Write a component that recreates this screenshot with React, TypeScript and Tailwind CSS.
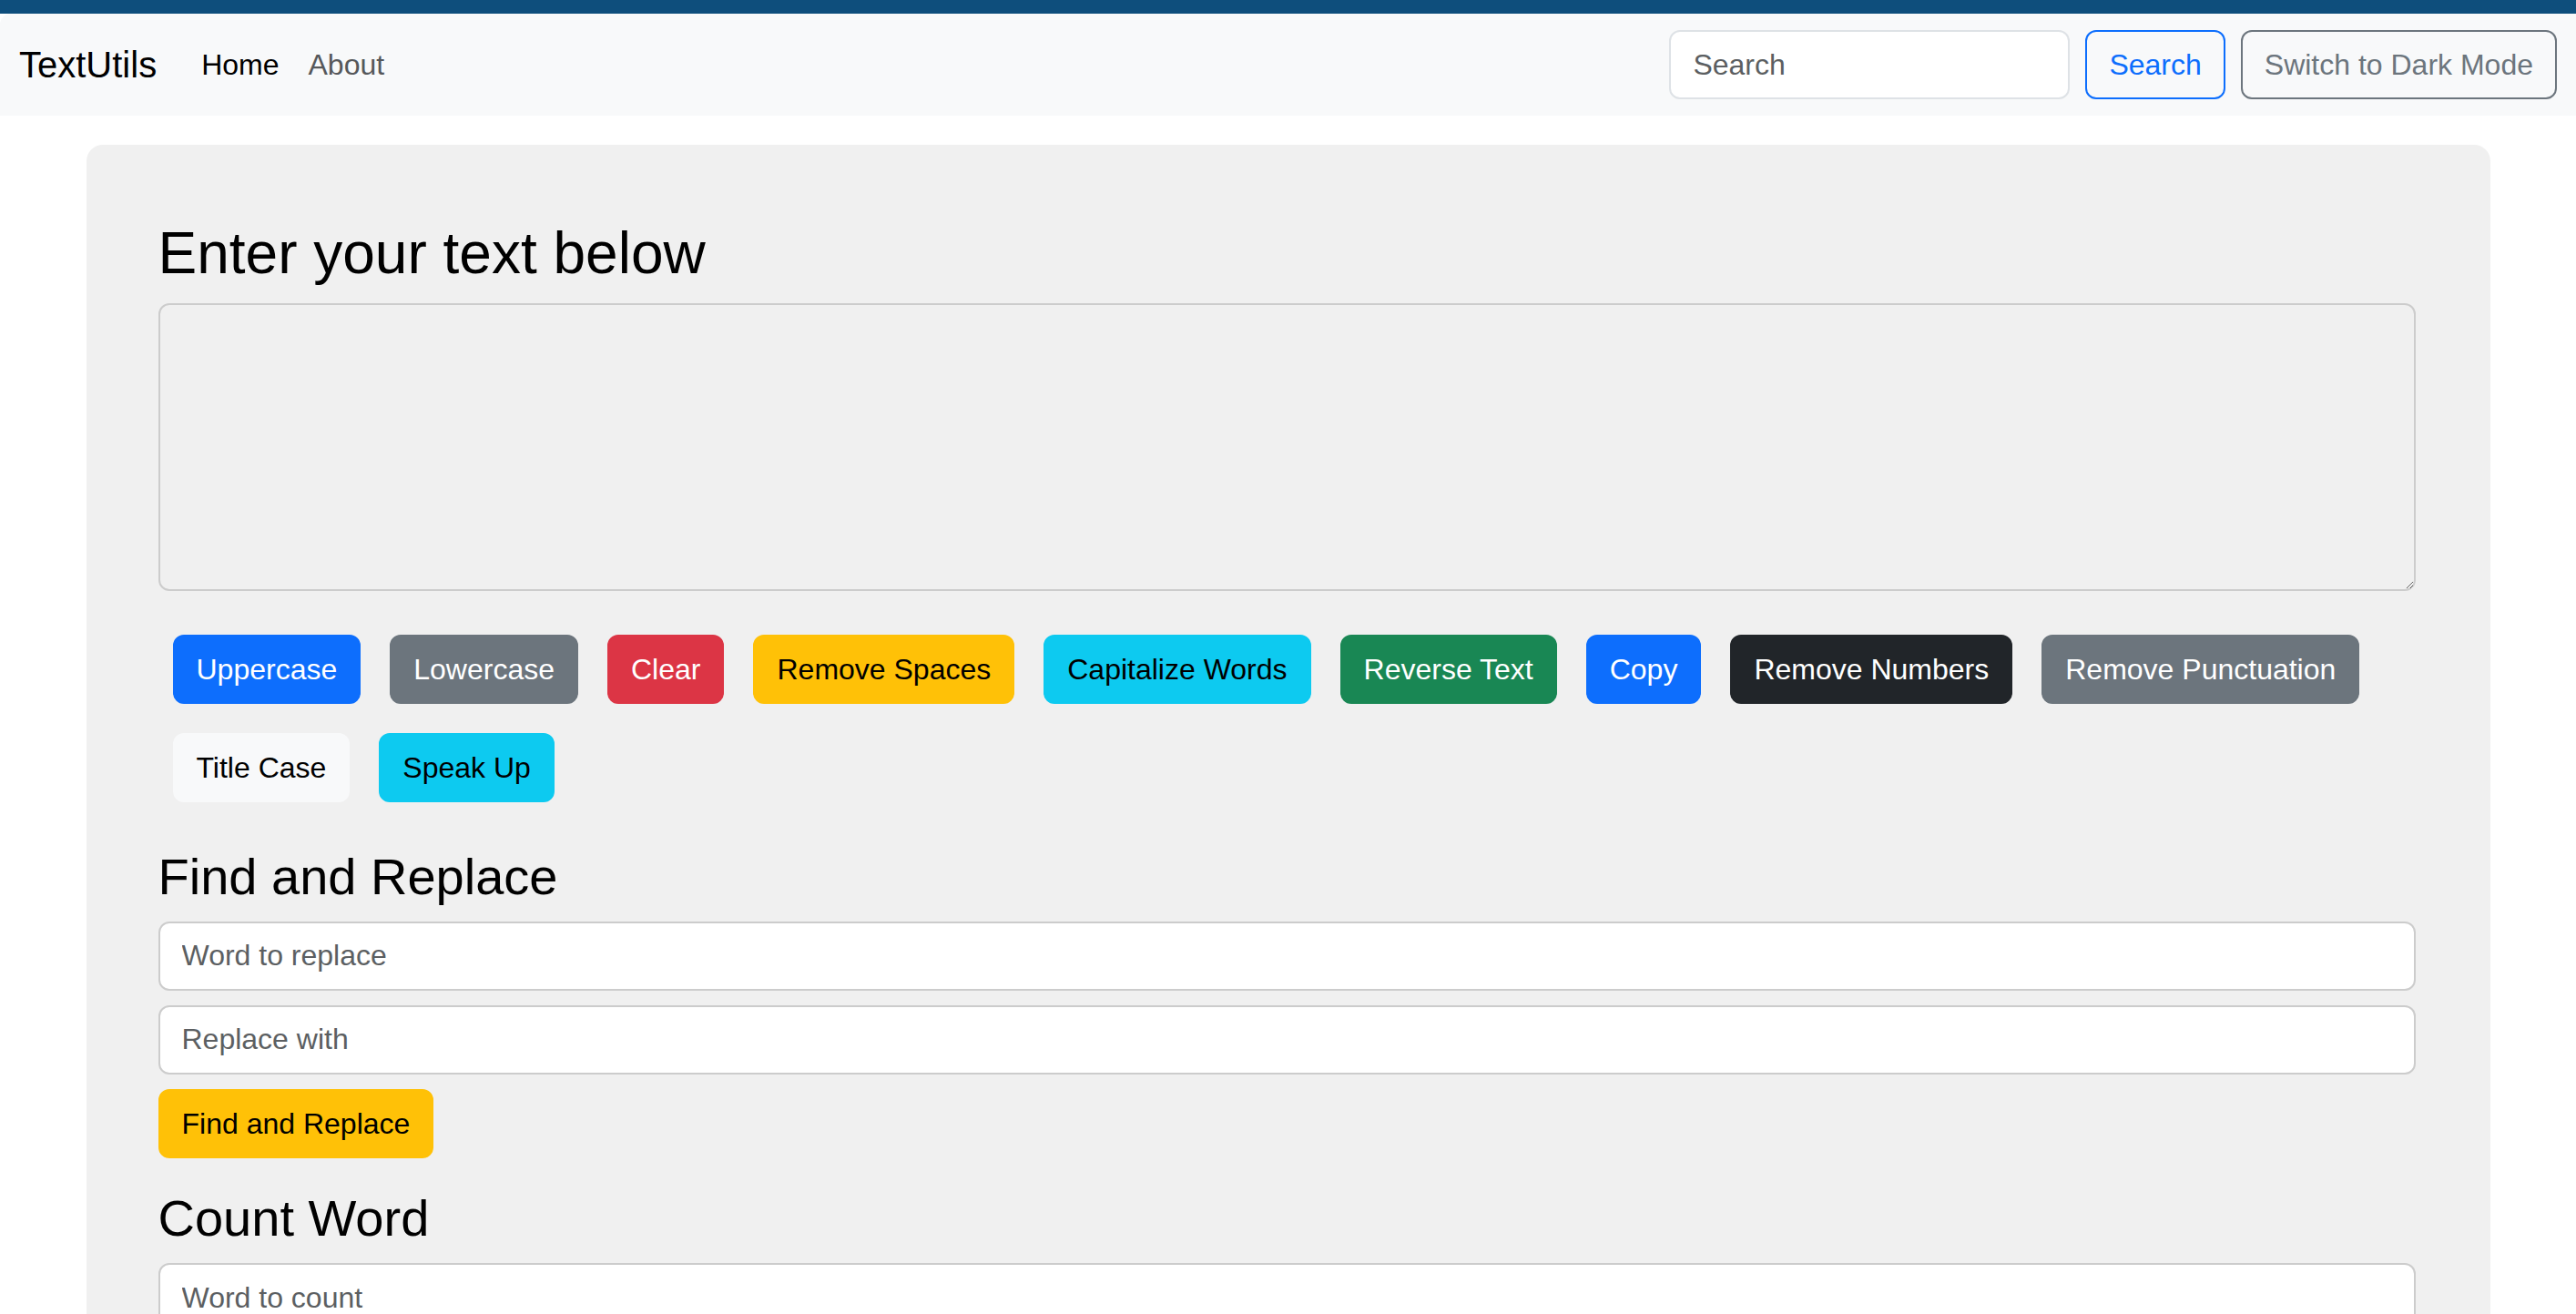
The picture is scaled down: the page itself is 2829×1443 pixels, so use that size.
import { useState } from 'react'

const font = { fontFamily: '"Liberation Sans", Arial, Helvetica, sans-serif' }

// bootstrap-like button variants, at 200% zoom
const BTN = 'm-[16px] px-[24px] py-[12px] text-[32px] leading-[48px] border-2 rounded-[12px]'

const ACTIONS = [
  { label: 'Uppercase', cls: 'bg-[#0d6efd] border-[#0d6efd] text-white' },
  { label: 'Lowercase', cls: 'bg-[#6c757d] border-[#6c757d] text-white' },
  { label: 'Clear', cls: 'bg-[#dc3545] border-[#dc3545] text-white' },
  { label: 'Remove Spaces', cls: 'bg-[#ffc107] border-[#ffc107] text-black' },
  { label: 'Capitalize Words', cls: 'bg-[#0dcaf0] border-[#0dcaf0] text-black' },
  { label: 'Reverse Text', cls: 'bg-[#198754] border-[#198754] text-white' },
  { label: 'Copy', cls: 'bg-[#0d6efd] border-[#0d6efd] text-white' },
  { label: 'Remove Numbers', cls: 'bg-[#212529] border-[#212529] text-white' },
  { label: 'Remove Punctuation', cls: 'bg-[#6c757d] border-[#6c757d] text-white' },
  { label: 'Title Case', cls: 'bg-[#f8f9fa] border-[#f8f9fa] text-black' },
  { label: 'Speak Up', cls: 'bg-[#0dcaf0] border-[#0dcaf0] text-black' },
]

const INPUT =
  'w-full h-[76px] px-[24px] bg-white border-2 border-[#cccccc] rounded-[12px] text-[32px] text-[#212529] placeholder:text-[#5c5f62] outline-none'

function Navbar() {
  return (
    <nav className="flex items-center justify-between h-[112px] pl-[21px] pr-[21px] bg-[#f8f9fa] rounded-tl-[12px]">
      <div className="flex items-center">
        <a className="text-[40px] leading-[1.5] text-black mr-[33px]">TextUtils</a>
        <a className="px-[16px] text-[32px] leading-[48px] text-black">Home</a>
        <a className="px-[16px] text-[32px] leading-[48px] text-[#56585b]">About</a>
      </div>
      <form className="flex items-center" onSubmit={(e) => e.preventDefault()}>
        <input
          type="search"
          placeholder="Search"
          className="w-[440px] h-[76px] px-[24px] mr-[17px] bg-white border-2 border-[#dee2e6] rounded-[12px] text-[32px] placeholder:text-[#5c5f62] outline-none"
        />
        <button className="px-[24px] py-[12px] text-[32px] leading-[48px] border-2 border-[#0d6efd] text-[#0d6efd] rounded-[12px]">
          Search
        </button>
        <button
          type="button"
          className="ml-[17px] px-[24px] py-[12px] text-[32px] leading-[48px] border-2 border-[#6c757d] text-[#6c757d] rounded-[12px]"
        >
          Switch to Dark Mode
        </button>
      </form>
    </nav>
  )
}

export default function App() {
  const [text, setText] = useState('')

  return (
    <div className="h-[1443px] overflow-hidden bg-white" style={font}>
      <div className="h-[15px] bg-[#0e4e7c]" />
      <Navbar />

      <div className="w-[2640px] mx-auto mt-[32px] pt-[81px] pb-[80px] pl-[79px] pr-[82px] bg-[#f0f0f0] rounded-[18px]">
        <h2 className="text-[64px] leading-[1.2] font-normal text-black mb-[16px]">Enter your text below</h2>
        <textarea
          value={text}
          onChange={(e) => setText(e.target.value)}
          className="block w-full h-[316px] p-[24px] bg-transparent border-2 border-[#cccccc] rounded-[12px] text-[32px] outline-none"
        />

        <div className="flex flex-wrap mt-[32px]">
          {ACTIONS.map((a) => (
            <button key={a.label} className={`${BTN} ${a.cls}`}>
              {a.label}
            </button>
          ))}
        </div>

        <h3 className="mt-[32px] mb-[16px] text-[56px] leading-[1.2] font-normal text-black">Find and Replace</h3>
        <input placeholder="Word to replace" className={INPUT} />
        <input placeholder="Replace with" className={`${INPUT} mt-[16px]`} />
        <button className="mt-[16px] px-[24px] py-[12px] text-[32px] leading-[48px] border-2 border-[#ffc107] bg-[#ffc107] text-black rounded-[12px]">
          Find and Replace
        </button>

        <h3 className="mt-[32px] mb-[16px] text-[56px] leading-[1.2] font-normal text-black">Count Word</h3>
        <input placeholder="Word to count" className={INPUT} />
        <button className="mt-[16px] px-[24px] py-[12px] text-[32px] leading-[48px] border-2 border-[#198754] bg-[#198754] text-white rounded-[12px]">
          Count
        </button>
      </div>
    </div>
  )
}
